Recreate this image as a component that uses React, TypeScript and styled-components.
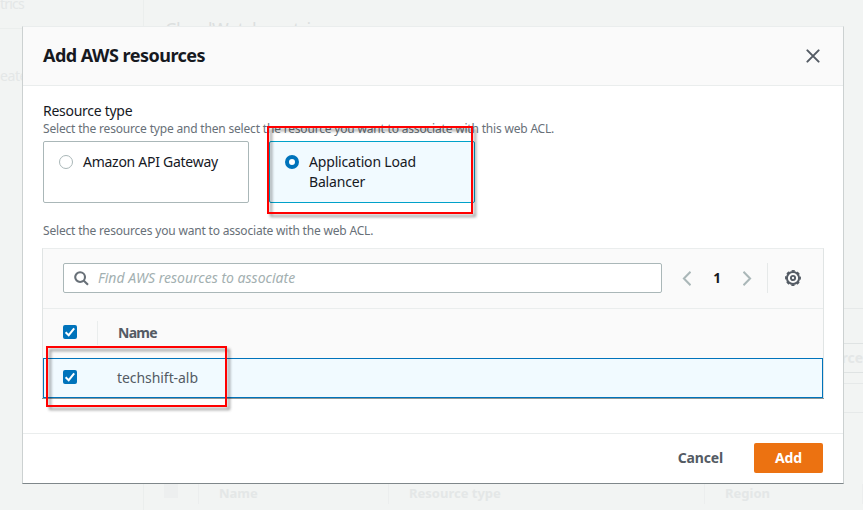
import React from "react";
import styled, { createGlobalStyle, css } from "styled-components";

const GlobalStyle = createGlobalStyle`
  *, *::before, *::after { box-sizing: border-box; }
  body {
    margin: 0;
    background: #f2f4f3;
    color: #16191f;
    font-family: "Noto Sans", "Open Sans", sans-serif;
    font-size: 14px;
    line-height: 20px;
    overflow: hidden;
  }
`;

const Screen = styled.div`
  position: relative;
  width: 863px;
  height: 510px;
  overflow: hidden;
`;

/* Faded console page behind the dialog */
const Backdrop = styled.div`
  display: grid;
  grid-template-columns: 144px 1fr;
  height: 510px;
  color: #e4e7e7;
`;

const SideNav = styled.div`
  border-right: 1px solid #ebeeed;
`;

const NavItem = styled.div<{ $height: number; $line: number }>`
  height: ${(p) => p.$height}px;
  line-height: ${(p) => p.$line}px;
  letter-spacing: -0.8px;
  white-space: nowrap;
  & + & {
    border-top: 1px solid #ebeeed;
    letter-spacing: -0.4px;
  }
`;

const PageBody = styled.div`
  display: flex;
  flex-direction: column;
  min-width: 0;
`;

const PageTitle = styled.div`
  height: 308px;
  padding: 19px 0 0 21px;
  font-size: 18px;
  letter-spacing: -0.4px;
  color: #dcdfdf;
`;

const PageBand = styled.div<{ $height: number; $tone?: string }>`
  flex: none;
  display: flex;
  justify-content: flex-end;
  height: ${(p) => p.$height}px;
  border-top: 1px solid ${(p) => p.$tone ?? "#e6e9e9"};
  font-weight: 700;
  line-height: 28px;
`;

const PageTableHead = styled.div`
  display: grid;
  grid-template-columns: 55px 190px 316px 1fr;
  height: 42px;
  padding-top: 16px;
  font-size: 13px;
  font-weight: 700;
`;

const PageTableCell = styled.div`
  height: 20px;
  padding-left: 20px;
  line-height: 18px;
  border-right: 1px solid #eceeee;
  white-space: nowrap;
`;

const FadedCheck = styled.div`
  width: 14px;
  height: 14px;
  background: #edefef;
`;

const Dialog = styled.section`
  position: absolute;
  left: 22px;
  top: 26px;
  width: 822px;
  height: 458px;
  display: flex;
  flex-direction: column;
  background: #fff;
  border: 1px solid #ccd1d1;
  border-top-color: #eaeded;
  border-bottom-color: #7f878a;
`;

const DialogHeader = styled.header`
  display: flex;
  align-items: center;
  justify-content: space-between;
  height: 59px;
  padding: 0 23px 0 20px;
  background: #fafafa;
  border-bottom: 1px solid #eaeded;
`;

const Title = styled.h2`
  margin: 0;
  padding-bottom: 2px;
  font-size: 18px;
  line-height: 22px;
  font-weight: 700;
  letter-spacing: -0.51px;
`;

const IconButton = styled.button`
  display: flex;
  padding: 0;
  border: 0;
  background: none;
  color: #545b64;
`;

const DialogBody = styled.div`
  height: 347px;
  padding: 16px 19px 0 20px;
`;

const FieldLabel = styled.div`
  line-height: 18px;
  letter-spacing: -0.28px;
`;

const Hint = styled.div<{ $space?: number }>`
  margin-top: ${(p) => p.$space ?? 0}px;
  color: #687078;
  font-size: 12px;
  line-height: 18px;
  letter-spacing: -0.185px;
  white-space: nowrap;
`;

const Tiles = styled.div`
  display: flex;
  gap: 20px;
  margin-top: 3px;
`;

const Tile = styled.label<{ $selected?: boolean }>`
  position: relative;
  display: flex;
  gap: 10px;
  width: 206px;
  height: 62px;
  padding: 10px 15px;
  border: 1px solid ${(p) => (p.$selected ? "#00a1c9" : "#aab7b8")};
  border-radius: 2px;
  background: ${(p) => (p.$selected ? "#f1faff" : "#fff")};
`;

const Radio = styled.span<{ $selected?: boolean }>`
  flex: none;
  width: 14px;
  height: 14px;
  margin-top: 3px;
  border-radius: 50%;
  background: #fff;
  border: ${(p) => (p.$selected ? "4.5px solid #0073bb" : "1px solid #aab7b8")};
`;

const TileText = styled.span<{ $spacing: number }>`
  flex: none;
  width: 144px;
  letter-spacing: ${(p) => p.$spacing}px;
`;

const Table = styled.div`
  width: 782px;
  margin: 8px 0 0 -1px;
  border: 1px solid #e0e4e4;
  border-top-color: #eaeded;
  background: #fafafa;
`;

const Toolbar = styled.div`
  display: flex;
  align-items: flex-start;
  height: 60px;
  padding: 14px 20px 0;
  border-bottom: 1px solid #eaeded;
`;

const Search = styled.div`
  display: flex;
  align-items: center;
  gap: 9px;
  width: 599px;
  height: 30px;
  padding-left: 10px;
  color: #a3b0b1;
  font-style: italic;
  letter-spacing: 0.01px;
  background: #fff;
  border: 1px solid #aab7b8;
  border-radius: 2px;
`;

const Pager = styled.div`
  display: flex;
  align-items: center;
  justify-content: space-between;
  width: 106px;
  height: 30px;
  padding: 0 15px 0 20px;
  border-right: 1px solid #e6e9e9;
  color: #aab7b8;
`;

const PageNumber = styled.span`
  color: #16191f;
  font-weight: 700;
  font-size: 13.5px;
`;

const Settings = styled(IconButton)`
  height: 30px;
  align-items: center;
  margin-left: 17px;
`;

const rowGrid = css`
  display: grid;
  grid-template-columns: 54px 1fr;
  align-items: center;
  color: #545b64;
`;

const HeadRow = styled.div`
  ${rowGrid}
  height: 49px;
  padding: 0 0 1px 1px;
  font-weight: 700;
`;

const BodyRow = styled.div`
  ${rowGrid}
  position: relative;
  height: 40px;
  padding-bottom: 1px;
  background: #f1faff;
  border: 1px solid #0073bb;
`;

const CheckCell = styled.div<{ $divided?: boolean }>`
  height: 24px;
  padding: 4px 0 0 19px;
  ${(p) => p.$divided && "border-right: 1px solid #eaeded;"}
`;

const Checkbox = styled.span`
  display: flex;
  width: 14px;
  height: 14px;
  border-radius: 2px;
  background: #0073bb;
`;

const NameCell = styled.div<{ $pad: number; $spacing: number }>`
  padding-left: ${(p) => p.$pad}px;
  letter-spacing: ${(p) => p.$spacing}px;
`;

const TableEnd = styled.div`
  height: 1px;
  margin: 0 -1px -1px;
  background: #8a9598;
`;

const DialogFooter = styled.footer`
  display: flex;
  align-items: center;
  justify-content: flex-end;
  gap: 11px;
  height: 50px;
  padding: 0 20px 2px 0;
  border-top: 1px solid #eaeded;
`;

const Button = styled.button<{ $primary?: boolean }>`
  height: 30px;
  padding: 0 ${(p) => (p.$primary ? 0 : 20)}px;
  width: ${(p) => (p.$primary ? "69px" : "auto")};
  border: 0;
  border-radius: 2px;
  font: inherit;
  font-weight: 700;
  letter-spacing: -0.15px;
  color: ${(p) => (p.$primary ? "#fff" : "#545b64")};
  background: ${(p) => (p.$primary ? "#ec7211" : "transparent")};
`;

/* Red annotation frame laid over the control it marks */
const Marker = styled.span<{ $x: number; $y: number; $w: number; $h: number }>`
  position: absolute;
  z-index: 1;
  left: ${(p) => p.$x}px;
  top: ${(p) => p.$y}px;
  width: ${(p) => p.$w}px;
  height: ${(p) => p.$h}px;
  border: 2px solid #f00;
  filter: drop-shadow(3px 3px 1.5px rgba(0, 0, 0, 0.42));
  pointer-events: none;
`;

const CheckMark = () => (
  <svg width="14" height="14" viewBox="0 0 14 14" fill="none" stroke="#fff" strokeWidth="2">
    <path d="M2.6 7.2 5.7 10.2 11.2 3.4" />
  </svg>
);

const CloseIcon = () => (
  <svg width="14" height="14" viewBox="0 0 14 14" stroke="currentColor" strokeWidth="2" strokeLinecap="round">
    <path d="m1.4 1.4 11.2 11.2M12.6 1.4 1.4 12.6" />
  </svg>
);

const SearchIcon = () => (
  <svg width="15" height="15" viewBox="0 0 15 15" fill="none" stroke="#687078" strokeWidth="2.1">
    <circle cx="6.1" cy="6.1" r="4.9" />
    <path d="m9.6 9.6 4.4 4.2" />
  </svg>
);

const Chevron = ({ right }: { right?: boolean }) => (
  <svg width="9" height="15" viewBox="0 0 9 15" fill="none" stroke="currentColor" strokeWidth="2">
    <path d={right ? "M.5 .8 7.1 7.5 .5 14.2" : "M8.5 .8 1.9 7.5 8.5 14.2"} />
  </svg>
);

const GearIcon = () => (
  <svg width="16" height="16" viewBox="0 0 16 16" fill="none" stroke="currentColor">
    <circle cx="8" cy="8" r="6.1" strokeWidth="2" />
    <circle cx="8" cy="8" r="7.2" strokeWidth="1.5" strokeDasharray="3.2 2.455" strokeDashoffset="1.6" />
    <circle cx="8" cy="8" r="2.1" strokeWidth="1.9" />
  </svg>
);

export default function App() {
  return (
    <>
      <GlobalStyle />
      <Screen>
        <Backdrop>
          <SideNav>
            <NavItem $height={28} $line={8}>trics</NavItem>
            <NavItem $height={100} $line={94}>eate</NavItem>
          </SideNav>
          <PageBody>
            <PageTitle>CloudWatch metrics</PageTitle>
            <PageBand $height={35} />
            <PageBand $height={29} $tone="#dfe3e3">rce</PageBand>
            <PageBand $height={11} $tone="#dfe3e3" />
            <PageBand $height={29} />
            <PageBand $height={56} />
            <PageTableHead>
              <PageTableCell>
                <FadedCheck />
              </PageTableCell>
              <PageTableCell>Name</PageTableCell>
              <PageTableCell>Resource type</PageTableCell>
              <PageTableCell>Region</PageTableCell>
            </PageTableHead>
          </PageBody>
        </Backdrop>

        <Dialog role="dialog" aria-label="Add AWS resources">
          <DialogHeader>
            <Title>Add AWS resources</Title>
            <IconButton aria-label="Close">
              <CloseIcon />
            </IconButton>
          </DialogHeader>
          <DialogBody>
            <FieldLabel>Resource type</FieldLabel>
            <Hint>
              Select the resource type and then select the resource you want to associate with this web ACL.
            </Hint>
            <Tiles>
              <Tile>
                <Radio />
                <TileText $spacing={-0.27}>Amazon API Gateway</TileText>
              </Tile>
              <Tile $selected>
                <Radio $selected />
                <TileText $spacing={-0.17}>Application Load Balancer</TileText>
                <Marker $x={-3} $y={-16} $w={206} $h={88} />
              </Tile>
            </Tiles>
            <Hint $space={19}>Select the resources you want to associate with the web ACL.</Hint>
            <Table>
              <Toolbar>
                <Search>
                  <SearchIcon />
                  Find AWS resources to associate
                </Search>
                <Pager>
                  <Chevron />
                  <PageNumber>1</PageNumber>
                  <Chevron right />
                </Pager>
                <Settings aria-label="Preferences">
                  <GearIcon />
                </Settings>
              </Toolbar>
              <HeadRow>
                <CheckCell $divided>
                  <Checkbox>
                    <CheckMark />
                  </Checkbox>
                </CheckCell>
                <NameCell $pad={20} $spacing={-0.75}>Name</NameCell>
              </HeadRow>
              <BodyRow>
                <CheckCell>
                  <Checkbox>
                    <CheckMark />
                  </Checkbox>
                </CheckCell>
                <NameCell $pad={19} $spacing={-0.06}>techshift-alb</NameCell>
                <Marker $x={2} $y={-13} $w={181} $h={61} />
              </BodyRow>
              <TableEnd />
            </Table>
          </DialogBody>
          <DialogFooter>
            <Button>Cancel</Button>
            <Button $primary>Add</Button>
          </DialogFooter>
        </Dialog>
      </Screen>
    </>
  );
}
